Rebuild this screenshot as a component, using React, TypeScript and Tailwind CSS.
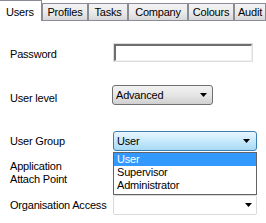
import React from "react";

function Arrow() {
  return (
    <svg width="7" height="4" viewBox="0 0 7 4" className="block">
      <path d="M0 0H7L3.5 4Z" fill="#000" />
    </svg>
  );
}

const tabs = [
  { label: "Profiles", w: "w-[46px]" },
  { label: "Tasks", w: "w-[40px]" },
  { label: "Company", w: "w-[60px]" },
  { label: "Colours", w: "w-[46px]" },
  { label: "Audit", w: "w-[32px]" },
];

export default function App() {
  return (
    <div
      className="relative w-[266px] h-[223px] overflow-hidden bg-white text-black text-[11px] tracking-[-0.2px] leading-[13px]"
      style={{ fontFamily: '"Liberation Sans", Arial, sans-serif' }}
    >
      {/* tab strip */}
      <div className="flex items-end h-[21px]">
        <div className="w-[43px] h-[21px] border-r border-t border-[#898c95] bg-white flex items-start pt-[5px] pl-[6px]">
          Users
        </div>
        {tabs.map((t) => (
          <div
            key={t.label}
            className={`${t.w} h-[18px] shrink-0 border border-[#898c95] bg-gradient-to-b from-[#f3f3f3] via-[#ebebeb] to-[#d8d8d8] flex items-center justify-center`}
          >
            <span className="block">{t.label}</span>
          </div>
        ))}
        <div className="flex-1 h-[1px] bg-[#898c95]" />
      </div>

      {/* form */}
      <div className="pl-[10px] flex flex-col">
        {/* Password */}
        <div className="mt-[22px] h-[19px] flex items-center">
          <div className="w-[103px] pt-[3px]">Password</div>
          <div className="w-[140px] h-[19px] border border-[#dedede]">
            <div className="w-full h-full border-t-2 border-l-2 border-t-[#6e6e6e] border-l-[#6e6e6e] border-r border-b border-r-[#f0f0f0] border-b-[#f0f0f0] bg-white" />
          </div>
        </div>

        {/* User level */}
        <div className="mt-[23px] h-[20px] flex items-center">
          <div className="w-[102px] pt-[7px]">User level</div>
          <div className="w-[101px] h-[20px] rounded-[3px] border border-[#707070] bg-gradient-to-b from-[#f2f2f2] via-[#e6e6e6] to-[#d0d0d0] flex items-center pl-[3px] pr-[5px]">
            <span className="flex-1">Advanced</span>
            <Arrow />
          </div>
        </div>

        {/* User Group */}
        <div className="mt-[26px] h-[20px] flex items-center">
          <div className="w-[103px] pt-[1px]">User Group</div>
          <div className="w-[144px] h-[20px] rounded-[3px] border border-[#3c7fb1] bg-gradient-to-b from-[#eaf6fd] via-[#c6e9fc] to-[#a7d9f5] flex items-center pl-[3px] pr-[6px]">
            <span className="flex-1">User</span>
            <Arrow />
          </div>
        </div>

        {/* Application Attach Point */}
        <div className="mt-[9px] h-[26px] flex items-start">
          <div className="w-[103px]">
            Application
            <br />
            Attach Point
          </div>
        </div>

        {/* Organisation Access */}
        <div className="mt-[9px] h-[20px] flex items-center">
          <div className="w-[103px]">Organisation Access</div>
          <div className="w-[144px] h-[20px] rounded-[2px] border border-[#dadada] bg-white flex items-center justify-end pr-[4px]">
            <Arrow />
          </div>
        </div>
      </div>

      {/* open dropdown list */}
      <div className="absolute left-[113px] top-[152px] w-[144px] h-[43px] border border-[#646464] bg-white flex flex-col">
        <div className="h-[13px] bg-[#3399ff] text-white pl-[3px]">User</div>
        <div className="h-[13px] pl-[3px]">Supervisor</div>
        <div className="h-[13px] pl-[3px]">Administrator</div>
      </div>
    </div>
  );
}
